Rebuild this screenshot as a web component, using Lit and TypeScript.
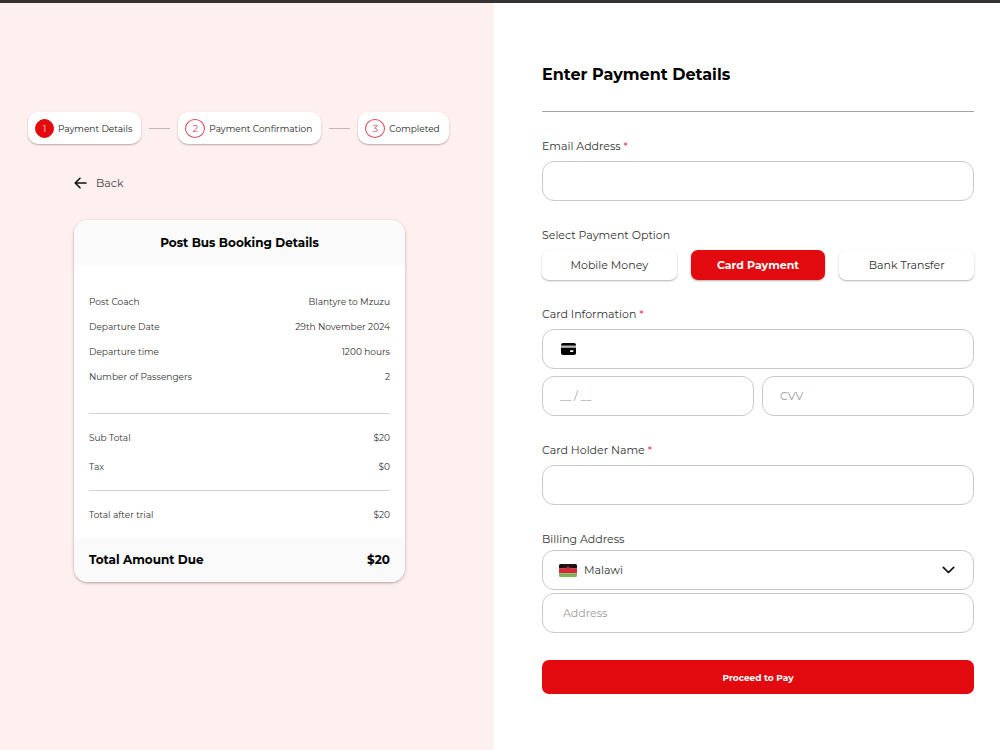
import { LitElement, html, css, nothing } from "lit";
import { customElement, property, state } from "lit/decorators.js";
import { classMap } from "lit/directives/class-map.js";

const base = css`
  *,
  *::before,
  *::after {
    box-sizing: border-box;
  }
  h1,
  h2,
  dl,
  dt,
  dd,
  ol {
    margin: 0;
    padding: 0;
  }
`;

@customElement("step-list")
class StepList extends LitElement {
  @property({ type: Number }) current = 1;

  private steps = ["Payment Details", "Payment Confirmation", "Completed"];

  static styles = [
    base,
    css`
      :host {
        display: block;
      }
      .steps {
        display: flex;
        align-items: center;
        gap: 8px;
        list-style: none;
      }
      .step {
        display: flex;
        align-items: center;
        gap: 4px;
        height: 32px;
        padding: 0 9px 0 7px;
        border-radius: 10px;
        background: #fff;
        box-shadow: 0 1px 2px rgba(60, 30, 30, 0.35);
        color: #222;
        font-size: 9px;
        white-space: nowrap;
      }
      .number {
        display: grid;
        place-items: center;
        width: 20px;
        height: 19px;
        border: 1px solid #d9485a;
        border-radius: 50%;
        color: #d9485a;
        font-size: 10px;
      }
      .active .number {
        width: 19px;
        border-color: #e20a0e;
        background: #e20a0e;
        color: #ffd5d5;
      }
      .line {
        flex: 0 1 21px;
        height: 1px;
        background: #cdb3b3;
      }
    `,
  ];

  render() {
    return html`<ol class="steps">
      ${this.steps.map(
        (name, i) => html`
          ${i ? html`<li class="line" role="presentation"></li>` : nothing}
          <li class=${classMap({ step: true, active: i + 1 === this.current })}>
            <span class="number">${i + 1}</span>${name}
          </li>
        `
      )}
    </ol>`;
  }
}

@customElement("booking-summary")
class BookingSummary extends LitElement {
  private trip = [
    ["Post Coach", "Blantyre to Mzuzu"],
    ["Departure Date", "29th November 2024"],
    ["Departure time", "1200 hours"],
    ["Number of Passengers", "2"],
  ];
  private costs = [
    ["Sub Total", "$20"],
    ["Tax", "$0"],
  ];

  static styles = [
    base,
    css`
      :host {
        display: block;
      }
      .card {
        border-radius: 14px;
        overflow: hidden;
        background: #fff;
        box-shadow: 0 1px 3px rgba(60, 30, 30, 0.4);
        color: #333;
        font-size: 9px;
      }
      .title {
        background: #fafafa;
        color: #000;
        font-size: 12px;
        line-height: 45px;
        font-weight: 700;
        text-align: center;
      }
      .body {
        padding: 24px 15px 9px;
      }
      .row {
        display: flex;
        justify-content: space-between;
        line-height: 25px;
      }
      .costs {
        margin: 24px 0 9px;
        padding: 9px 0;
        border: solid #d2d2d2;
        border-width: 1px 0;
      }
      .cost {
        line-height: 29px;
      }
      .total {
        padding: 0 15px;
        background: #fafafa;
        color: #000;
        font-size: 12px;
        line-height: 44px;
        font-weight: 700;
      }
    `,
  ];

  private row(pair: string[], kind = "") {
    return html`<div class="row ${kind}"><dt>${pair[0]}</dt><dd>${pair[1]}</dd></div>`;
  }

  render() {
    return html`<section class="card">
      <h2 class="title">Post Bus Booking Details</h2>
      <div class="body">
        <dl>${this.trip.map((p) => this.row(p))}</dl>
        <dl class="costs">${this.costs.map((p) => this.row(p, "cost"))}</dl>
        <dl>${this.row(["Total after trial", "$20"], "cost")}</dl>
      </div>
      <dl>${this.row(["Total Amount Due", "$20"], "total")}</dl>
    </section>`;
  }
}

@customElement("payment-form")
class PaymentForm extends LitElement {
  @state() private method = "Card Payment";

  private methods = ["Mobile Money", "Card Payment", "Bank Transfer"];

  static styles = [
    base,
    css`
      :host {
        display: block;
      }
      .form {
        display: grid;
        gap: 27px;
        color: #333;
        font-size: 11px;
      }
      .heading {
        padding-bottom: 24px;
        border-bottom: 1px solid #a3a3a3;
        color: #000;
        font-size: 16px;
        line-height: 24px;
        font-weight: 700;
      }
      .group {
        display: grid;
        gap: 7px;
        min-width: 0;
      }
      .billing {
        gap: 3px;
      }
      .label {
        display: block;
        line-height: 15px;
      }
      .required {
        color: #e0314a;
      }
      .input {
        width: 100%;
        height: 40px;
        padding: 0 17px;
        border: 1px solid #c9c9c9;
        border-radius: 12px;
        background: #fff;
        color: #333;
        font: inherit;
        outline-color: #e20a0e;
      }
      .input::placeholder {
        color: #9b9b9b;
        opacity: 1;
      }
      .address {
        padding: 0 20px;
      }
      .stack {
        display: grid;
        align-items: center;
      }
      .stack > * {
        grid-area: 1 / 1;
      }
      .stack > svg {
        pointer-events: none;
        z-index: 1;
      }
      .card-icon {
        margin-left: 19px;
      }
      .flag {
        margin-left: 17px;
      }
      .chevron {
        justify-self: end;
        margin-right: 19px;
      }
      .with-icon {
        padding-left: 41px;
        appearance: none;
      }
      .pair {
        display: grid;
        grid-template-columns: 1fr 1fr;
        gap: 8px;
      }
      .methods {
        display: grid;
        grid-template-columns: repeat(3, 1fr);
        gap: 14px;
      }
      .method {
        height: 30px;
        padding: 0;
        border: 0;
        border-radius: 7px;
        background: #fff;
        box-shadow: 0 1px 2px rgba(0, 0, 0, 0.3);
        color: #333;
        font: inherit;
      }
      .selected {
        background: #e20a0e;
        color: #fff;
        font-weight: 700;
      }
      .pay {
        height: 34px;
        border: 0;
        border-radius: 7px;
        background: #e20a0e;
        color: #fff;
        font: inherit;
        font-size: 9px;
        font-weight: 700;
      }
    `,
  ];

  render() {
    const star = html`<span class="required">*</span>`;
    return html`<form class="form" @submit=${(e: Event) => e.preventDefault()}>
      <h1 class="heading">Enter Payment Details</h1>
      <div class="group">
        <label class="label" for="email">Email Address ${star}</label>
        <input class="input" id="email" type="email" />
      </div>
      <div class="group" role="group" aria-labelledby="option">
        <span class="label" id="option">Select Payment Option</span>
        <div class="methods">
          ${this.methods.map(
            (m) => html`<button
              type="button"
              class=${classMap({ method: true, selected: m === this.method })}
              aria-pressed=${m === this.method}
              @click=${() => (this.method = m)}
            >${m}</button>`
          )}
        </div>
      </div>
      <div class="group">
        <label class="label" for="card">Card Information ${star}</label>
        <div class="stack">
          <svg class="card-icon" width="15" height="12" viewBox="0 0 15 12" aria-hidden="true">
            <path d="M2 0h11a2 2 0 0 1 2 2v.8H0V2a2 2 0 0 1 2-2z" />
            <path d="M0 4.4h15V10a2 2 0 0 1-2 2H2a2 2 0 0 1-2-2z" />
            <path d="M0 2.8h15v1.600H0z" fill="#bbb" />
            <rect x="9" y="7.3" width="3.4" height="1.600" rx=".5" fill="#fff" />
          </svg>
          <input class="input with-icon" id="card" inputmode="numeric" />
        </div>
        <div class="pair">
          <input class="input" aria-label="Expiry date" placeholder="__ / __" />
          <input class="input" aria-label="CVV" placeholder="CVV" />
        </div>
      </div>
      <div class="group">
        <label class="label" for="holder">Card Holder Name ${star}</label>
        <input class="input" id="holder" />
      </div>
      <div class="group billing">
        <label class="label" for="country">Billing Address</label>
        <div class="stack">
          <svg class="flag" width="18" height="13" viewBox="0 0 18 13" aria-hidden="true">
            <path d="M1.5 0h15A1.5 1.5 0 0 1 18 1.5V4.4H0V1.5A1.5 1.5 0 0 1 1.5 0z" fill="#17110f" />
            <path d="M0 4.4h18v4.8H0z" fill="#d8283c" />
            <path d="M0 9.200h18v2.300a1.5 1.5 0 0 1-1.5 1.5h-15A1.5 1.5 0 0 1 0 11.500z" fill="#7ab254" />
            <path d="M7 4.400a2 2 0 0 1 4 0z" fill="#b5222f" />
            <path d="M9 .9v1M6.600 1.600l.6.7M11.400 1.600l-.6.7M5.500 3.200l.8.300M12.500 3.200l-.8.300" stroke="#b32430" stroke-width=".6" />
          </svg>
          <select class="input with-icon" id="country">
            <option>Malawi</option>
          </select>
          <svg class="chevron" width="13" height="8" viewBox="0 0 13 8" fill="none" aria-hidden="true">
            <path d="M1.300 1.300l5.200 5.200 5.200-5.200" stroke="#111" stroke-width="1.700" stroke-linecap="round" stroke-linejoin="round" />
          </svg>
        </div>
        <input class="input address" aria-label="Address" placeholder="Address" />
      </div>
      <button class="pay" type="submit">Proceed to Pay</button>
    </form>`;
  }
}

@customElement("app-root")
class AppRoot extends LitElement {
  static styles = [
    base,
    css`
      :host {
        display: grid;
        grid-template-columns: 494fr 506fr;
        min-height: 100vh;
        box-sizing: border-box;
        border-top: 3px solid #363132;
        background: #fff;
        font-family: Montserrat, Inter, "Open Sans", sans-serif;
      }
      .summary {
        min-width: 0;
        padding: 109px 28px 40px;
        background: #fff0f0;
      }
      .booking {
        max-width: 331px;
        margin: 29px 0 0 46px;
      }
      .back {
        display: inline-flex;
        align-items: center;
        gap: 9px;
        margin-bottom: 27px;
        color: #444;
        font-size: 11px;
        line-height: 20px;
        text-decoration: none;
      }
      .payment {
        min-width: 0;
        padding: 60px 26px 40px 48px;
      }
    `,
  ];

  render() {
    return html`
      <aside class="summary">
        <step-list current="1"></step-list>
        <div class="booking">
          <a class="back" href="#">
            <svg width="13" height="12" viewBox="0 0 13 12" fill="none" stroke="#111" stroke-width="1.600" stroke-linecap="round" stroke-linejoin="round" aria-hidden="true">
              <path d="M12 6H1.500M6 1.200L1.200 6 6 10.800" />
            </svg>
            Back
          </a>
          <booking-summary></booking-summary>
        </div>
      </aside>
      <main class="payment"><payment-form></payment-form></main>
    `;
  }
}
